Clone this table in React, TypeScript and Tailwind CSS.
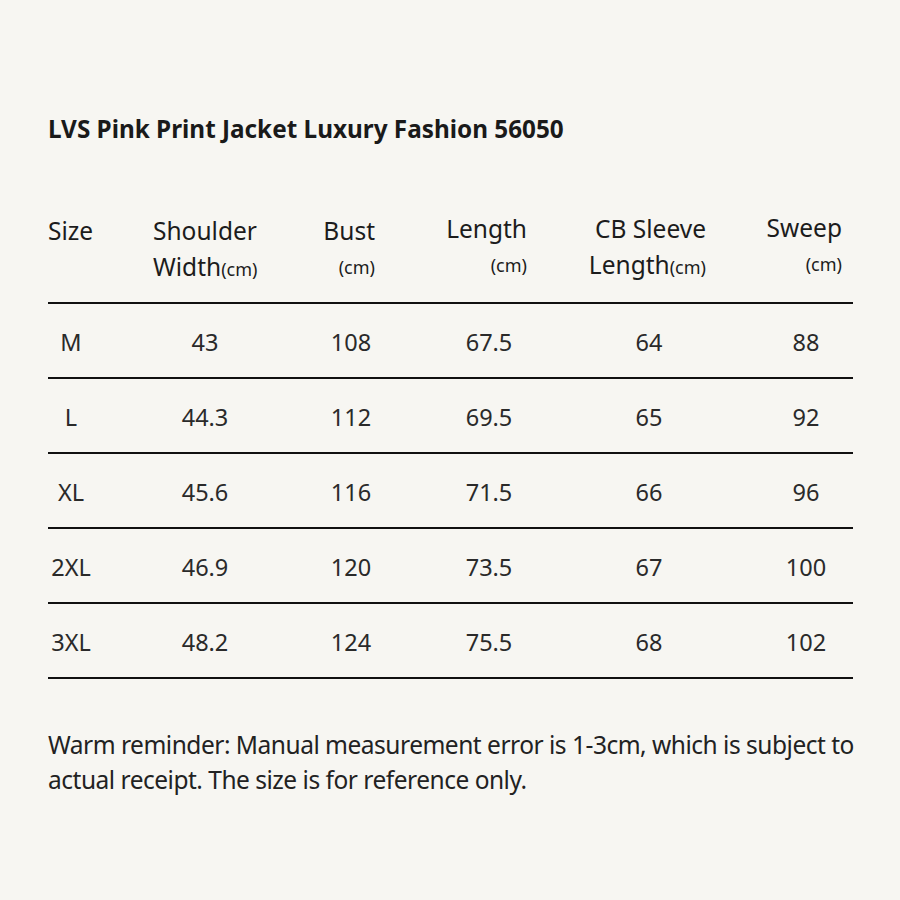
import React from "react";

const rows = [
  ["M", "43", "108", "67.5", "64", "88"],
  ["L", "44.3", "112", "69.5", "65", "92"],
  ["XL", "45.6", "116", "71.5", "66", "96"],
  ["2XL", "46.9", "120", "73.5", "67", "100"],
  ["3XL", "48.2", "124", "75.5", "68", "102"],
];

export default function App() {
  return (
    <div
      className="w-[900px] h-[900px] bg-[#f7f6f2] text-[#1c1c1c] pl-[48px] pt-[112px]"
      style={{ fontFamily: '"Noto Sans", "Open Sans", sans-serif' }}
    >
      <h1 className="text-[24.3px] leading-[34px] font-bold text-[#1a1a1a]">
        LVS Pink Print Jacket Luxury Fashion 56050
      </h1>

      <div className="w-[805px] mt-[67px]">
        <div className="flex text-[24.5px] leading-[36px] pb-[15px] border-b-2 border-[#111]">
          <div className="w-[46px] whitespace-nowrap">Size</div>
          <div className="w-[222px] pl-[59px] whitespace-nowrap">
            <div>Shoulder</div>
            <div>
              Width<span className="text-[18px]">(cm)</span>
            </div>
          </div>
          <div className="w-[70px] flex flex-col items-end pr-[11px] whitespace-nowrap">
            <div>Bust</div>
            <div className="text-[18px]">(cm)</div>
          </div>
          <div className="w-[206px] flex flex-col items-end pr-[65px] whitespace-nowrap -mt-[2px]">
            <div>Length</div>
            <div className="text-[18px]">(cm)</div>
          </div>
          <div className="w-[114px] flex flex-col items-end whitespace-nowrap -mt-[2px]">
            <div>CB Sleeve</div>
            <div>
              Length<span className="text-[18px]">(cm)</span>
            </div>
          </div>
          <div className="w-[147px] flex flex-col items-end pr-[11px] whitespace-nowrap -mt-[3px]">
            <div>Sweep</div>
            <div className="text-[18px]">(cm)</div>
          </div>
        </div>

        {rows.map((r, i) => (
          <div
            key={i}
            className="flex items-center h-[75px] pt-[4px] text-[23.5px] text-[#2a2a2a] border-b-2 border-[#111]"
          >
            <div className="w-[46px] text-center">{r[0]}</div>
            <div className="w-[222px] text-center">{r[1]}</div>
            <div className="w-[70px] text-center">{r[2]}</div>
            <div className="w-[206px] text-center">{r[3]}</div>
            <div className="w-[114px] text-center">{r[4]}</div>
            <div className="w-[147px] pl-[53px] text-center">{r[5]}</div>
          </div>
        ))}
      </div>

      <p className="mt-[48px] w-[815px] text-[24.5px] leading-[35px] tracking-[-0.02em] text-[#222]">
        Warm reminder: Manual measurement error is 1-3cm, which is subject to actual receipt. The size is for reference only.
      </p>
    </div>
  );
}
